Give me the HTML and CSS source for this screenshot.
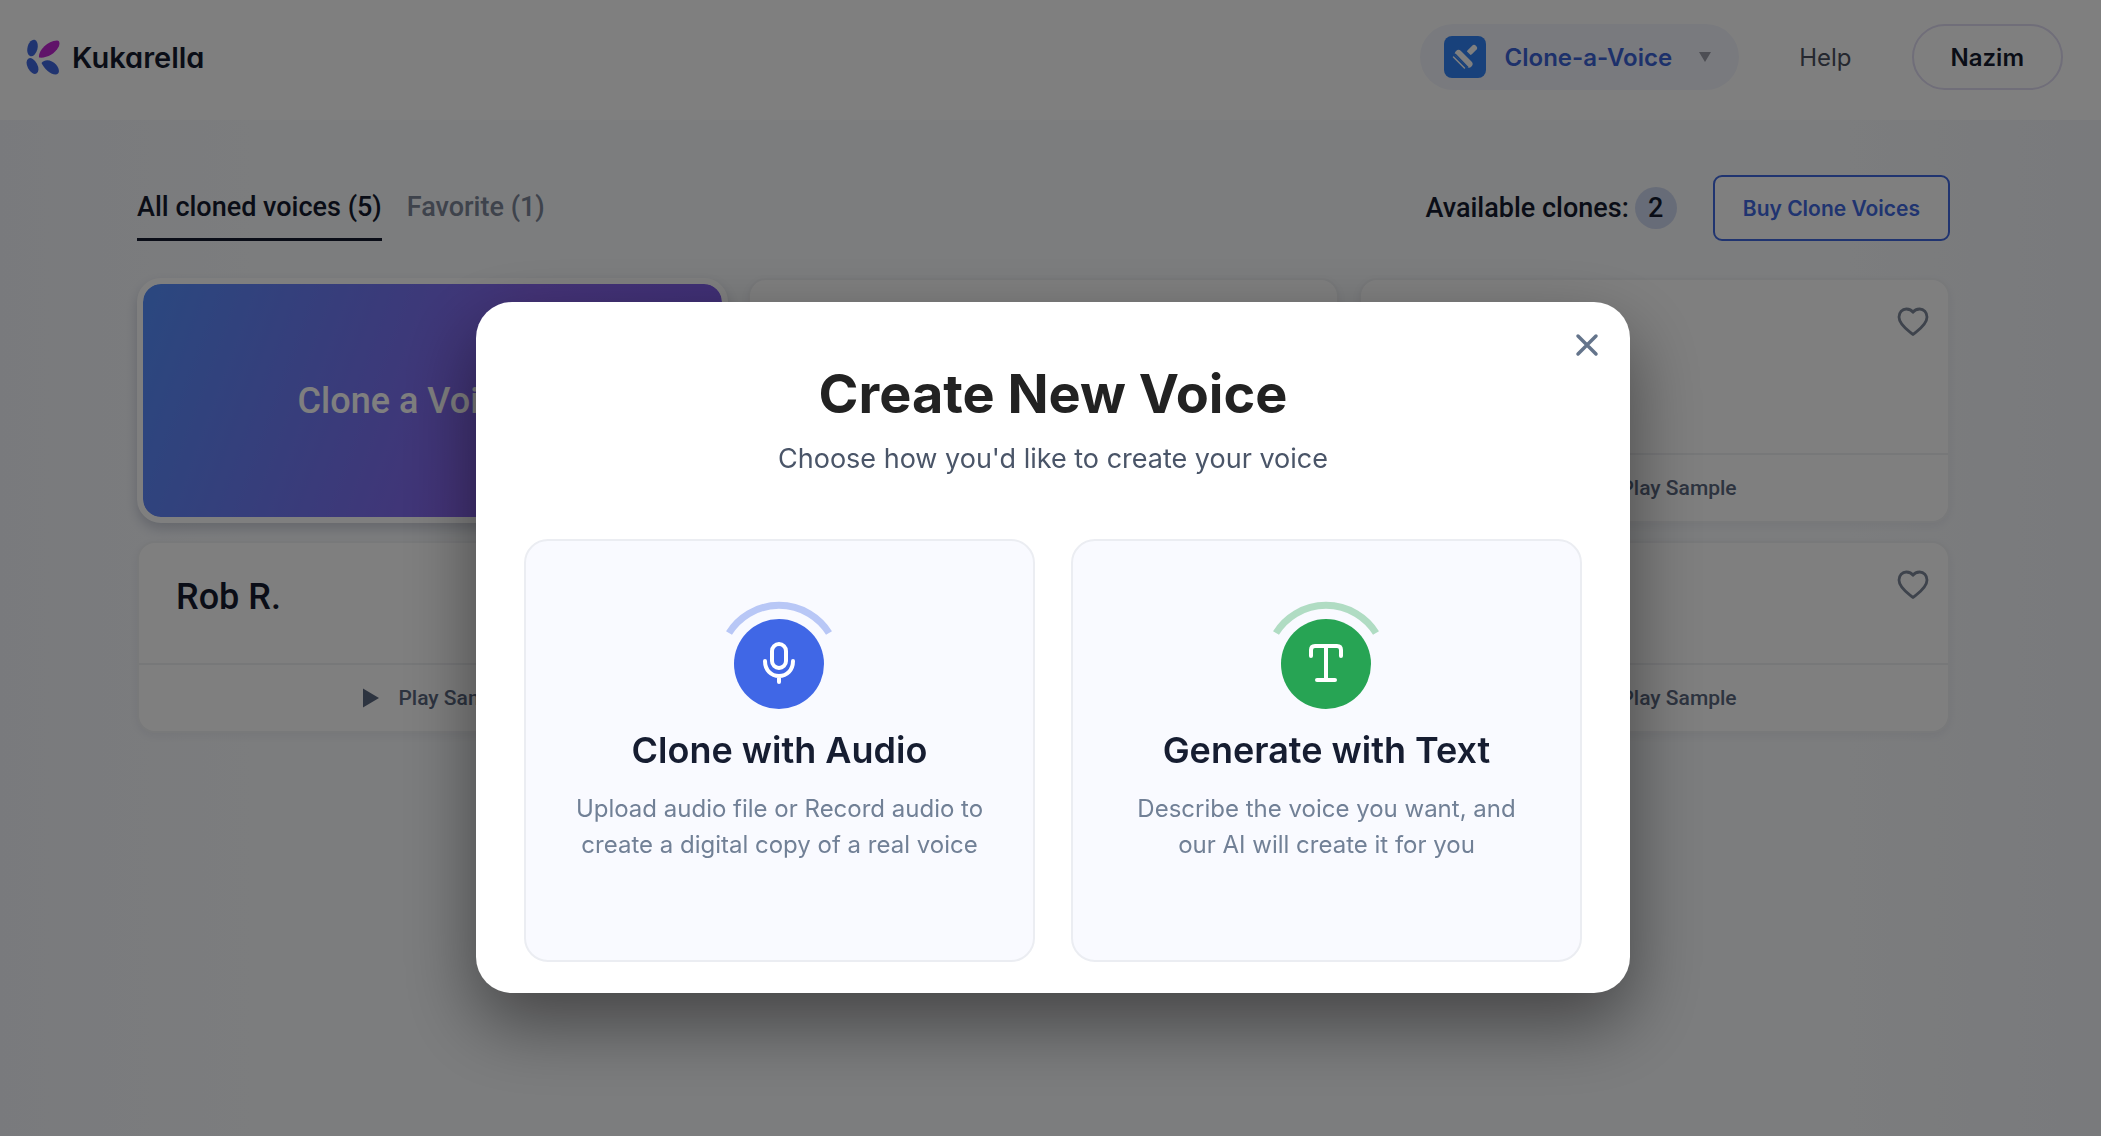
FILE: index.html
```html
<!DOCTYPE html>
<html lang="en">
<head>
    <meta charset="UTF-8">
    <meta name="viewport" content="width=device-width, initial-scale=1.0">
    <title>Kukarella - Clone a Voice</title>
    <link rel="stylesheet" href="styles.css">
</head>
<body>

    <!-- Shared icons -->
    <svg class="sprite" aria-hidden="true">
        <symbol id="icon-heart" viewBox="0 0 32 32">
            <path d="M16 28.5C13 25.5 2 19.5 2 11C2 6.5 5.3 3 9.3 3C12.2 3 14.6 4 16 6.2C17.4 4 19.8 3 22.7 3C26.7 3 30 6.5 30 11C30 19.5 19 25.5 16 28.5Z" fill="none" stroke="currentColor" stroke-width="2.8" stroke-linejoin="round"/>
        </symbol>
        <symbol id="icon-play" viewBox="0 0 36 24">
            <path d="M13 2.5L29 12L13 21.5Z" fill="currentColor"/>
        </symbol>
    </svg>

    <header class="header">
        <a class="logo" href="#">
            <svg class="logo-mark" viewBox="0 0 34 36" aria-hidden="true">
                <ellipse cx="6.5" cy="9" rx="5" ry="8.5" transform="rotate(14 6.5 9)" fill="#4169e1"/>
                <ellipse cx="6.5" cy="27" rx="5" ry="8.5" transform="rotate(-28 6.5 27)" fill="#4169e1"/>
                <path d="M13 18.5C12 12 21 2 31 1.5C34.5 1.5 33.5 6 32.5 8C29 15 20 19.5 13 18.5Z" fill="#c026d3"/>
                <path d="M15.5 24C19 19.5 26 21 30 25.5C34 30 34 35.5 29.5 35.5C24 35.5 18 29.5 15.5 24Z" fill="#4169e1"/>
            </svg>
            <span class="logo-text">Kukarella</span>
        </a>
        <nav class="nav">
            <button class="app-switch" type="button" aria-haspopup="true">
                <svg class="app-icon" viewBox="0 0 42 42" aria-hidden="true">
                    <rect width="42" height="42" rx="8" fill="#3182f6"/>
                    <g stroke="#fff" stroke-linecap="round">
                        <path d="M14.5 17.5L25 28" stroke-width="7"/>
                        <path d="M26 16L30 12" stroke-width="6"/>
                        <path d="M9.5 21L20.5 32" stroke-width="1.5"/>
                    </g>
                    <path d="M21 14.5L28 21.5M11 18L24 31.5" stroke="#3182f6" stroke-width="1.5"/>
                </svg>
                <span>Clone-a-Voice</span>
                <svg class="caret" viewBox="0 0 12 10" aria-hidden="true"><path d="M0 0H12L6 10Z" fill="currentColor"/></svg>
            </button>
            <a class="help" href="#">Help</a>
            <button class="user" type="button">Nazim</button>
        </nav>
    </header>

    <main class="page">
        <div class="toolbar">
            <div class="tabs">
                <a class="tab active" href="#all">All cloned voices (5)</a>
                <a class="tab" href="#favorite">Favorite (1)</a>
            </div>
            <div class="clones">
                <span class="clones-label">Available clones:</span>
                <span class="badge">2</span>
                <button class="buy" type="button">Buy Clone Voices</button>
            </div>
        </div>

        <div class="voices">
            <button class="clone-card" type="button">Clone a Voice</button>
            <article class="voice">
                <div class="voice-body"></div>
                <button class="play" type="button"><svg class="play-icon"><use href="#icon-play"/></svg>Play Sample</button>
            </article>
            <article class="voice">
                <div class="voice-body">
                    <button class="like" type="button" aria-label="Add to favorites"><svg class="heart"><use href="#icon-heart"/></svg></button>
                </div>
                <button class="play" type="button"><svg class="play-icon"><use href="#icon-play"/></svg>Play Sample</button>
            </article>
            <article class="voice">
                <div class="voice-body">
                    <h2 class="voice-name">Rob R.</h2>
                </div>
                <button class="play" type="button"><svg class="play-icon"><use href="#icon-play"/></svg>Play Sample</button>
            </article>
            <article class="voice">
                <div class="voice-body"></div>
                <button class="play" type="button"><svg class="play-icon"><use href="#icon-play"/></svg>Play Sample</button>
            </article>
            <article class="voice">
                <div class="voice-body">
                    <button class="like" type="button" aria-label="Add to favorites"><svg class="heart"><use href="#icon-heart"/></svg></button>
                </div>
                <button class="play" type="button"><svg class="play-icon"><use href="#icon-play"/></svg>Play Sample</button>
            </article>
        </div>
    </main>

    <!-- Create voice dialog -->
    <div class="overlay">
        <div class="modal" role="dialog" aria-modal="true" aria-labelledby="modalTitle">
            <button class="close" type="button" aria-label="Close">
                <svg class="close-icon" viewBox="0 0 24 24"><path d="M3 3L21 21M21 3L3 21" stroke="currentColor" stroke-width="3.5" stroke-linecap="round"/></svg>
            </button>
            <h1 class="modal-title" id="modalTitle">Create New Voice</h1>
            <p class="modal-text">Choose how you'd like to create your voice</p>
            <div class="options">
                <button class="option audio" type="button">
                    <svg class="option-icon" viewBox="0 0 126 126" aria-hidden="true">
                        <path d="M12 32A59 59 0 0 1 112 32" fill="none" stroke="currentColor" stroke-opacity="0.35" stroke-width="7"/>
                        <circle cx="62" cy="63" r="45" fill="currentColor"/>
                        <g fill="none" stroke="#fff" stroke-width="4" stroke-linecap="round">
                            <rect x="55" y="43" width="14" height="24" rx="7"/>
                            <path d="M48 60C48 69 54 75 62 75C70 75 76 69 76 60M62 75V81"/>
                        </g>
                    </svg>
                    <span class="option-title">Clone with Audio</span>
                    <span class="option-text">Upload audio file or Record audio to create a digital copy of a real voice</span>
                </button>
                <button class="option text" type="button">
                    <svg class="option-icon" viewBox="0 0 126 126" aria-hidden="true">
                        <path d="M12 32A59 59 0 0 1 112 32" fill="none" stroke="currentColor" stroke-opacity="0.35" stroke-width="7"/>
                        <circle cx="62" cy="63" r="45" fill="currentColor"/>
                        <path d="M47 55V49Q47 45 51 45H73Q77 45 77 49V55M62 45V79M53 79H71" fill="none" stroke="#fff" stroke-width="4" stroke-linecap="round" stroke-linejoin="round"/>
                    </svg>
                    <span class="option-title">Generate with Text</span>
                    <span class="option-text">Describe the voice you want, and our AI will create it for you</span>
                </button>
            </div>
        </div>
    </div>

</body>
</html>
```
FILE: styles.css
```css
* {
    box-sizing: border-box;
}
body {
    margin: 0;
    min-height: 100vh;
    font-family: Inter, sans-serif;
    color: #141b2e;
    background: linear-gradient(90deg, #f3f5fb, #f8fafc 12%, #f8fafc 88%, #f2f4f9);
}
button {
    font-family: inherit;
    color: inherit;
    background: none;
    border: none;
    padding: 0;
    cursor: pointer;
}
a {
    color: inherit;
    text-decoration: none;
}
.sprite {
    display: none;
}

/* Header */
.header {
    display: flex;
    align-items: center;
    justify-content: space-between;
    height: 120px;
    padding: 0 38px 6px 26px;
    background: #fff;
}
.logo {
    display: flex;
    align-items: center;
    gap: 12px;
}
.logo-mark {
    width: 34px;
    height: 36px;
}
.logo-text {
    font-size: 29px;
    font-weight: 600;
    font-feature-settings: "cv11";
}
.nav {
    display: flex;
    align-items: center;
}
.app-switch {
    display: flex;
    align-items: center;
    height: 66px;
    padding: 0 28px 0 24px;
    border-radius: 33px;
    background: #f3f5fc;
    color: #3b62d6;
    font-size: 24px;
    font-weight: 600;
}
.app-icon {
    width: 42px;
    height: 42px;
    margin-right: 19px;
}
.caret {
    width: 12px;
    height: 10px;
    margin-left: 27px;
    color: #9a9ca8;
}
.help {
    margin: 0 60px;
    color: #4b5160;
    font-size: 24px;
}
.user {
    height: 66px;
    padding: 0 37px;
    border: 2px solid #e0dcf3;
    border-radius: 33px;
    font-size: 24px;
    font-weight: 600;
}

/* Page */
.page {
    padding: 55px 151px 40px 137px;
}
.toolbar {
    display: flex;
    align-items: flex-end;
    justify-content: space-between;
    margin-bottom: 37px;
    font-family: Roboto, sans-serif;
    font-size: 27px;
}
.tabs {
    display: flex;
    gap: 25px;
}
.tab {
    padding-bottom: 15px;
    border-bottom: 3px solid transparent;
    color: #7d8698;
    font-weight: 500;
    line-height: 32px;
}
.tab.active {
    color: #141b2e;
    border-color: #141b2e;
}
.clones {
    display: flex;
    align-items: center;
}
.clones-label {
    font-weight: 500;
}
.badge {
    width: 42px;
    margin: 0 36px 0 6px;
    border-radius: 50%;
    background: #cfd8f0;
    font-weight: 500;
    line-height: 42px;
    text-align: center;
}
.buy {
    height: 66px;
    padding: 0 28px;
    border: 2px solid #4169e1;
    border-radius: 9px;
    background: #fff;
    color: #4169e1;
    font-family: Inter, sans-serif;
    font-size: 21px;
    font-weight: 600;
}
.voices {
    display: grid;
    grid-template-columns: repeat(3, 1fr);
    gap: 18px 20px;
    font-family: Roboto, sans-serif;
}
.clone-card {
    min-height: 245px;
    padding-right: 50px;
    border: 6px solid #fff;
    border-radius: 24px;
    background: linear-gradient(110deg, #5590ff, #8866ee 60%, #7c5ce8) padding-box, #fff;
    box-shadow: 0 6px 12px rgba(30, 40, 80, 0.2);
    color: #fff;
    font-size: 36px;
    font-weight: 500;
}
.voice {
    display: flex;
    flex-direction: column;
    border: 2px solid #f1f2f5;
    border-radius: 18px;
    background: #fff;
    box-shadow: 0 3px 8px rgba(30, 40, 80, 0.06);
}
.voice-body {
    display: flex;
    flex: 1;
    min-height: 120px;
    padding: 26px 18px 0 37px;
}
.voice-name {
    margin: 5px 0 0;
    font-size: 36px;
    font-weight: 500;
    line-height: 46px;
}
.like {
    align-self: flex-start;
    margin-left: auto;
    color: #7c8799;
}
.heart {
    display: block;
    width: 34px;
    height: 32px;
}
.play {
    display: flex;
    align-items: center;
    justify-content: center;
    gap: 12px;
    height: 68px;
    border-top: 2px solid #eff0f3;
    color: #5b6880;
    font-size: 21px;
    font-weight: 500;
}
.play-icon {
    width: 36px;
    height: 24px;
}

/* Modal */
.overlay {
    position: fixed;
    inset: 0;
    display: flex;
    align-items: flex-start;
    justify-content: center;
    padding: 302px 0 40px 5px;
    background: rgba(0, 0, 0, 0.5);
}
.modal {
    position: relative;
    width: 1154px;
    padding: 60px 48px 31px;
    border-radius: 36px;
    background: #fff;
    box-shadow: 0 30px 72px rgba(0, 0, 0, 0.45);
    text-align: center;
}
.close {
    position: absolute;
    top: 31px;
    right: 31px;
    color: #64748b;
}
.close-icon {
    display: block;
    width: 24px;
    height: 24px;
}
.modal-title {
    margin: 0;
    color: #222;
    font-size: 54px;
    font-weight: 700;
    line-height: 64px;
}
.modal-text {
    margin: 13px 0 60px;
    color: #4a5568;
    font-size: 27px;
    line-height: 40px;
}
.options {
    display: grid;
    grid-template-columns: repeat(2, 1fr);
    gap: 36px;
}
.option {
    display: flex;
    flex-direction: column;
    align-items: center;
    min-height: 423px;
    padding: 60px 45px 0;
    border: 2px solid #ebedf2;
    border-radius: 24px;
    background: #f9faff;
}
.option-icon {
    width: 126px;
    height: 126px;
}
.audio .option-icon {
    color: #4067e6;
}
.text .option-icon {
    color: #27a454;
}
.option-title {
    margin-bottom: 18px;
    color: #161d31;
    font-size: 36px;
    font-weight: 600;
    line-height: 46px;
}
.option-text {
    color: #718096;
    font-size: 24px;
    line-height: 36px;
}
```
